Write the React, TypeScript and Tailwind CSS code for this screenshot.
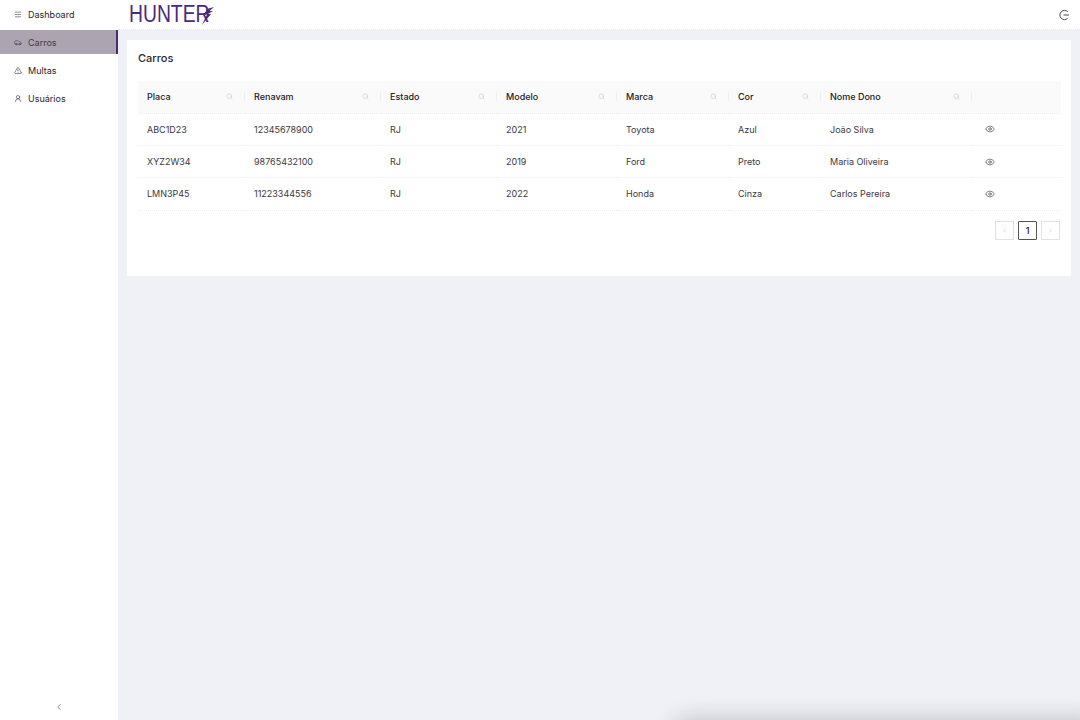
import { Car, ChevronLeft, ChevronRight, Eye, Menu, Search, TriangleAlert, UserRound } from "lucide-react";

const menuItems = [
  { label: "Dashboard", Icon: Menu },
  { label: "Carros", Icon: Car, active: true },
  { label: "Multas", Icon: TriangleAlert },
  { label: "Usuários", Icon: UserRound },
];

const columns = [
  { label: "Placa", width: "w-[107px]" },
  { label: "Renavam", width: "w-[136px]" },
  { label: "Estado", width: "w-[116px]" },
  { label: "Modelo", width: "w-[120px]" },
  { label: "Marca", width: "w-[112px]" },
  { label: "Cor", width: "w-[92px]" },
  { label: "Nome Dono", width: "w-[151px]" },
];

const cars = [
  ["ABC1D23", "12345678900", "RJ", "2021", "Toyota", "Azul", "João Silva"],
  ["XYZ2W34", "98765432100", "RJ", "2019", "Ford", "Preto", "Maria Oliveira"],
  ["LMN3P45", "11223344556", "RJ", "2022", "Honda", "Cinza", "Carlos Pereira"],
];

function Sidebar() {
  return (
    <aside className="flex h-full w-[118px] shrink-0 flex-col justify-between bg-white">
      <nav className="flex flex-col gap-1 pt-[2px]">
        {menuItems.map(({ label, Icon, active }) => (
          <a
            key={label}
            className={
              active
                ? "flex h-6 items-center gap-[6px] border-r-2 border-[#4b2a7b] bg-[#aca4b1] pl-[14px] text-[#3f3a45]"
                : "flex h-6 items-center gap-[6px] pl-[14px] text-[#26242a]"
            }
          >
            <Icon size={8} className="h-[9px] w-[8px]" strokeWidth={1.6} />
            <span>{label}</span>
          </a>
        ))}
      </nav>
      <div className="flex h-6 items-center justify-center pb-[2px] text-[#55525a]">
        <ChevronLeft size={10} strokeWidth={1.6} />
      </div>
    </aside>
  );
}

function Header() {
  return (
    <header className="flex h-[30px] shrink-0 items-center justify-between border-b border-dotted border-[#e8e8ee] bg-white pl-[11px] pr-[10px]">
      <div className="flex items-center">
        <span className="w-[73px] origin-left scale-x-[0.84] font-['Liberation_Sans',sans-serif] text-[23px] leading-none whitespace-nowrap text-[#4b2a7b]">
          HUNTER
        </span>
        <svg width="14" height="20" viewBox="0 0 14 20" className="ml-[-1px] mt-[3px]">
          <path d="M13 1 L6 3 L3 9 L6 8.5 L1 19 L10 8 L7 8 L12 5 L8.5 5 Z" fill="#4b2a7b" />
        </svg>
      </div>
      <svg width="12" height="12" viewBox="0 0 12 12" fill="none" stroke="#4a4650" strokeWidth="1">
        <path d="M9.6 2.6 A4.6 4.6 0 1 0 9.6 9.4" />
        <path d="M5.5 6 H11" />
      </svg>
    </header>
  );
}

function CarsTable() {
  return (
    <table className="w-[923px] table-fixed border-collapse">
      <thead>
        <tr className="h-[32px] border-b border-dotted border-[#eeeeee] bg-[#fafafa] text-left">
          {columns.map((col) => (
            <th key={col.label} className={`${col.width} p-0 font-medium text-[#22202a]`}>
              <div className="flex items-center justify-between border-r border-[#efefef] pl-[9px] pr-[11px]">
                <span>{col.label}</span>
                <Search size={7} className="text-[#bdbdc2]" strokeWidth={1.6} />
              </div>
            </th>
          ))}
          <th className="p-0" />
        </tr>
      </thead>
      <tbody>
        {cars.map((row) => (
          <tr key={row[0]} className="h-[32.4px] border-b border-dotted border-[#eeeeee]">
            {row.map((cell) => (
              <td key={cell} className="p-0 pl-[9px] text-[#3a3840]">
                {cell}
              </td>
            ))}
            <td className="p-0 pl-[13px] text-[#3a3840]">
              <Eye size={10} strokeWidth={1.5} />
            </td>
          </tr>
        ))}
      </tbody>
    </table>
  );
}

function Pagination() {
  return (
    <div className="mt-[10px] flex justify-end gap-1">
      <button className="flex h-[19px] w-[19px] items-center justify-center border border-[#e2e2e6] text-[#bcbcc2]">
        <ChevronLeft size={7} />
      </button>
      <button className="flex h-[19px] w-[19px] items-center justify-center rounded-[1px] border border-[#55525e] font-medium text-[#22202a]">
        1
      </button>
      <button className="flex h-[19px] w-[19px] items-center justify-center border border-[#e2e2e6] text-[#bcbcc2]">
        <ChevronRight size={7} />
      </button>
    </div>
  );
}

export default function App() {
  return (
    <div className="relative flex h-[720px] overflow-hidden bg-[#f0f1f6] font-['Inter',sans-serif] text-[9px] leading-none">
      <Sidebar />
      <div className="flex min-w-0 flex-1 flex-col">
        <Header />
        <main className="px-[9px] pt-[10px]">
          <section className="h-[236px] bg-white px-[11px] pt-3">
            <h1 className="text-[11px] leading-[12px] font-medium text-[#2a2830]">Carros</h1>
            <div className="mt-[17px]">
              <CarsTable />
              <Pagination />
            </div>
          </section>
        </main>
      </div>
      {/* sombra de um aviso que fica abaixo da tela */}
      <div className="absolute top-[724px] right-[-20px] left-[680px] h-10 rounded-lg shadow-[0_0_22px_6px_rgba(40,40,60,0.22)]" />
    </div>
  );
}
